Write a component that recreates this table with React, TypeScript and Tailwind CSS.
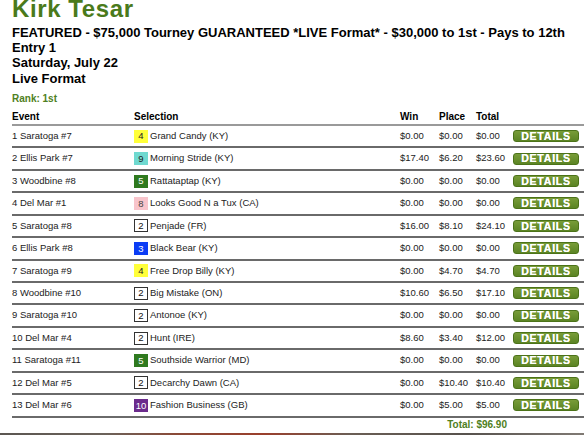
import React from "react"

type Entry = {
  event: string
  pp: string
  horse: string
  win: string
  place: string
  total: string
}

// saddle-cloth colours, keyed by program number
const BADGE: Record<string, string> = {
  "2": "bg-white text-[#111] border border-[#333]",
  "3": "bg-[#0b3cf5] text-white",
  "4": "bg-[#ffff3a] text-[#222]",
  "5": "bg-[#2f7a1f] text-white",
  "8": "bg-[#f8c4cb] text-[#444]",
  "9": "bg-[#6fd9d0] text-[#222]",
  "10": "bg-[#6b2b8c] text-white",
}

const ROWS: Entry[] = [
  { event: "1 Saratoga #7", pp: "4", horse: "Grand Candy (KY)", win: "$0.00", place: "$0.00", total: "$0.00" },
  { event: "2 Ellis Park #7", pp: "9", horse: "Morning Stride (KY)", win: "$17.40", place: "$6.20", total: "$23.60" },
  { event: "3 Woodbine #8", pp: "5", horse: "Rattataptap (KY)", win: "$0.00", place: "$0.00", total: "$0.00" },
  { event: "4 Del Mar #1", pp: "8", horse: "Looks Good N a Tux (CA)", win: "$0.00", place: "$0.00", total: "$0.00" },
  { event: "5 Saratoga #8", pp: "2", horse: "Penjade (FR)", win: "$16.00", place: "$8.10", total: "$24.10" },
  { event: "6 Ellis Park #8", pp: "3", horse: "Black Bear (KY)", win: "$0.00", place: "$0.00", total: "$0.00" },
  { event: "7 Saratoga #9", pp: "4", horse: "Free Drop Billy (KY)", win: "$0.00", place: "$4.70", total: "$4.70" },
  { event: "8 Woodbine #10", pp: "2", horse: "Big Mistake (ON)", win: "$10.60", place: "$6.50", total: "$17.10" },
  { event: "9 Saratoga #10", pp: "2", horse: "Antonoe (KY)", win: "$0.00", place: "$0.00", total: "$0.00" },
  { event: "10 Del Mar #4", pp: "2", horse: "Hunt (IRE)", win: "$8.60", place: "$3.40", total: "$12.00" },
  { event: "11 Saratoga #11", pp: "5", horse: "Southside Warrior (MD)", win: "$0.00", place: "$0.00", total: "$0.00" },
  { event: "12 Del Mar #5", pp: "2", horse: "Decarchy Dawn (CA)", win: "$0.00", place: "$10.40", total: "$10.40" },
  { event: "13 Del Mar #6", pp: "10", horse: "Fashion Business (GB)", win: "$0.00", place: "$5.00", total: "$5.00" },
]

const COLS = "grid grid-cols-[122px_266px_39px_37px_37px_66px_1fr]"

function DetailsButton() {
  return (
    <button
      type="button"
      className="flex h-[12px] w-[67px] items-center justify-center rounded-[3px] border border-[#4c7319] bg-[linear-gradient(#789c38,#5b8424)] text-[10.5px] font-bold leading-none tracking-[0.8px] text-white [text-shadow:0_0_0.6px_#fff]"
    >
      DETAILS
    </button>
  )
}

export default function App() {
  return (
    <div className="relative h-[435px] w-[584px] overflow-hidden bg-white font-['Liberation_Sans',Arial,sans-serif] text-[#222]">
      <div className="pl-[12px]">
        <div className="h-[18px] text-[24px] font-bold leading-[18px] tracking-[0.6px] text-[#4a7a1b]">Kirk Tesar</div>

        <div className="mt-[6.5px] text-[13px] font-bold leading-[15.4px] text-black">
          <div className="whitespace-nowrap">
            FEATURED - $75,000 Tourney GUARANTEED *LIVE Format* - $30,000 to 1st - Pays to 12th
          </div>
          <div>Entry 1</div>
          <div>Saturday, July 22</div>
          <div>Live Format</div>
        </div>

        <div className="mt-[6.6px] text-[10px] font-bold leading-[12px] text-[#4f7f22]">Rank: 1st</div>

        <div className="w-[590px]">
          <div
            className={`${COLS} mt-[6.7px] h-[14.5px] border-b-2 border-[#9a9a9a] text-[10px] font-bold leading-[12px] text-black`}
          >
            <span>Event</span>
            <span>Selection</span>
            <span>Win</span>
            <span>Place</span>
            <span>Total</span>
            <span />
          </div>

          {ROWS.map((r) => (
            <div
              key={r.event}
              className={`${COLS} h-[22.45px] items-center border-b-2 border-[#6a6a6a] text-[9.5px] leading-[20.45px]`}
            >
              <span>{r.event}</span>
              <span className="flex items-center">
                <span
                  className={`mr-[2px] flex h-[13px] w-[14px] items-center justify-center leading-none ${BADGE[r.pp]}`}
                >
                  {r.pp}
                </span>
                {r.horse}
              </span>
              <span>{r.win}</span>
              <span>{r.place}</span>
              <span>{r.total}</span>
              <span className="flex items-center">
                <DetailsButton />
              </span>
              <span />
            </div>
          ))}

          <div className="flex justify-end pr-[95px] pt-[1.7px] text-[10px] font-bold leading-[12px] text-[#4f7f22]">
            Total: $96.90
          </div>
        </div>
      </div>

      {/* top edge of the photo banner below */}
      <div className="absolute bottom-0 left-0 h-[2px] w-full bg-[linear-gradient(90deg,#5b5651,#6b625a_18%,#8a4a38_30%,#9a3f2c_45%,#6a5e55_60%,#57524d_80%,#807a74)]" />
    </div>
  )
}
